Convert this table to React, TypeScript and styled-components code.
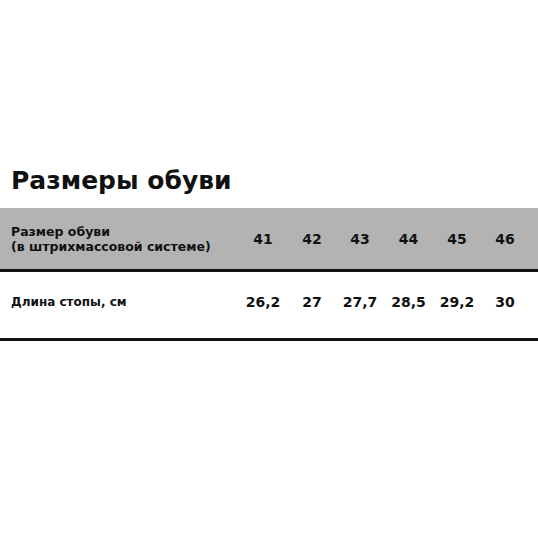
import React from "react";
import styled, { createGlobalStyle } from "styled-components";

const Global = createGlobalStyle`
  html, body { margin: 0; padding: 0; background: #ffffff; }
  body { font-family: "DejaVu Sans", "Liberation Sans", sans-serif; color: #111111; }
`;

const Page = styled.div`
  width: 538px;
  height: 538px;
  padding-top: 166px;
  box-sizing: border-box;
  display: flex;
  flex-direction: column;
`;

const Title = styled.h1`
  margin: 0 0 12px 11px;
  font-size: 25px;
  line-height: 30px;
  font-weight: 700;
  letter-spacing: 0;
  color: #111111;
`;

const Table = styled.div`
  display: flex;
  flex-direction: column;
`;

const Row = styled.div<{ $head?: boolean; $height: number; $lift?: number }>`
  display: grid;
  grid-template-columns: 238px 50px 48px 48px 49px 48px 48px 9px;
  align-items: center;
  height: ${(p) => p.$height}px;
  padding-bottom: ${(p) => p.$lift ?? 0}px;
  background: ${(p) => (p.$head ? "#b3b3b3" : "#ffffff")};
  border-bottom: 3px solid #111111;
  box-sizing: border-box;
`;

const Label = styled.div<{ $size: number }>`
  padding-left: 11px;
  font-size: ${(p) => p.$size}px;
  line-height: 15px;
  font-weight: 700;
`;

const Cell = styled.div`
  text-align: center;
  font-size: 14px;
  font-weight: 700;
  white-space: nowrap;
`;

const sizes = ["41", "42", "43", "44", "45", "46"];
const lengths = ["26,2", "27", "27,7", "28,5", "29,2", "30"];

export default function App() {
  return (
    <>
      <Global />
      <Page>
        <Title>Размеры обуви</Title>
        <Table>
          <Row $head $height={64}>
            <Label $size={12.5}>
              Размер обуви
              <br />
              (в штрихмассовой системе)
            </Label>
            {sizes.map((s) => (
              <Cell key={s}>{s}</Cell>
            ))}
          </Row>
          <Row $height={69} $lift={6}>
            <Label $size={12}>Длина стопы, см</Label>
            {lengths.map((l) => (
              <Cell key={l}>{l}</Cell>
            ))}
          </Row>
        </Table>
      </Page>
    </>
  );
}
